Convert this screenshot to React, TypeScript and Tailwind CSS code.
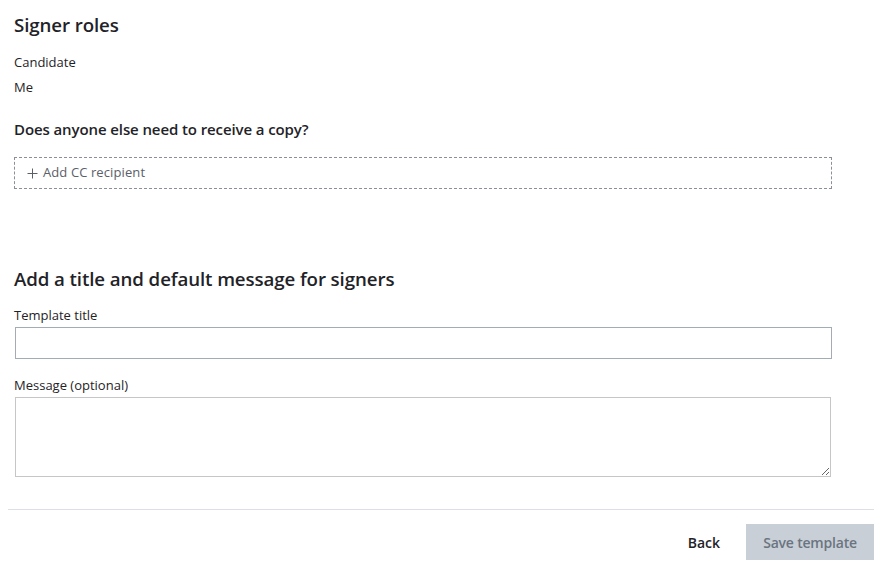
import React from 'react';

const App: React.FC = () => {
  return (
    <div className="min-h-screen bg-white px-2 text-[#1f2328]" style={{ fontFamily: '"Open Sans", Lato, sans-serif' }}>
      <div className="w-[824px] pl-[6px] pt-[13px]">
        {/* SIGNER ROLES */}
        <h2 className="text-[18.7px] font-semibold leading-[24px] tracking-[-0.1px]">Signer roles</h2>
        <div className="mt-[13px] text-[13px] leading-[25px]">
          <div>Candidate</div>
          <div>Me</div>
        </div>

        <h3 className="mt-[19px] text-[15px] font-semibold leading-[20px] tracking-[-0.1px]">
          Does anyone else need to receive a copy?
        </h3>
        <button className="mt-[18px] flex h-[32px] w-full items-center border border-dashed border-[#8a8f98] pl-[12px] text-[13px] text-[#5b6068]">
          <svg className="mr-[5px]" width="11" height="11" viewBox="0 0 11 11">
            <path d="M5.5 0.5v10M0.5 5.5h10" stroke="#5b6068" strokeWidth="1" fill="none" />
          </svg>
          <span className="tracking-[0.1px]">Add CC recipient</span>
        </button>

        {/* TITLE + MESSAGE */}
        <h2 className="mt-[78px] text-[18.7px] font-semibold leading-[24px] tracking-[-0.1px]">
          Add a title and default message for signers
        </h2>
        <label className="mt-[15px] block text-[13px] leading-[18px]">Template title</label>
        <input
          type="text"
          className="mt-[3px] block h-[32px] w-[817px] border border-[#a3abb3] bg-white ml-px outline-none"
        />
        <label className="mt-[17px] block text-[13px] leading-[18px]">Message (optional)</label>
        <textarea className="mt-[3px] block h-[80px] w-[816px] border border-[#c6c6c6] bg-white ml-px outline-none" />
      </div>

      {/* FOOTER */}
      <div className="mt-[32px] w-[866px] border-t border-[#dcdfe3]">
        <div className="flex items-center justify-end pt-[14px]">
          <button className="mr-[26px] text-[14px] font-semibold text-[#1f2328]">Back</button>
          <button className="h-[36px] w-[128px] bg-[#c8cfd7] text-[14px] font-semibold tracking-[-0.2px] text-[#6b7480]">
            Save template
          </button>
        </div>
      </div>
    </div>
  );
};

export default App;
